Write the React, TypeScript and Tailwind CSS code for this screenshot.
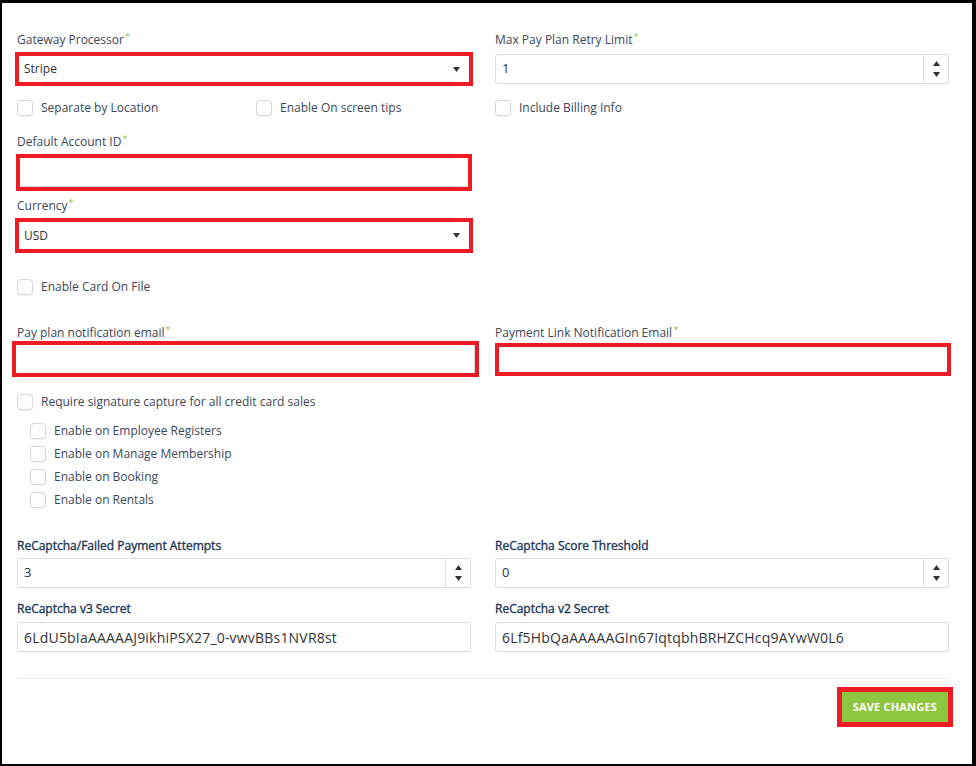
import type { ReactNode } from 'react';

const font = { fontFamily: '"Open Sans", "Liberation Sans", Arial, sans-serif' };

function Label({ children, req, strong }: { children: ReactNode; req?: boolean; strong?: boolean }) {
  return (
    <div
      className={
        'h-4 text-[12px] leading-4 whitespace-nowrap ' +
        (strong ? 'text-[#1c3554] [-webkit-text-stroke:0.35px_#1c3554]' : 'text-[#3b4757]')
      }
    >
      {children}
      {req && <sup className="ml-[1px] text-[9px] text-[#8cc63f]">*</sup>}
    </div>
  );
}

function Check({ label }: { label: string }) {
  return (
    <label className="flex h-4 items-center gap-2 text-[12px] text-[#3b4757]">
      <span className="h-4 w-4 shrink-0 rounded-[4px] border border-[#d6d6d6] bg-white shadow-[0_1px_1px_rgba(0,0,0,0.05)]" />
      <span className="whitespace-nowrap">{label}</span>
    </label>
  );
}

// red highlight around a field
function Frame({ children, className }: { children: ReactNode; className: string }) {
  return <div className={'border-4 border-[#ed1c24] bg-white ' + className}>{children}</div>;
}

function Caret() {
  return (
    <svg width="7" height="5" viewBox="0 0 7 5" className="shrink-0">
      <path d="M0 0h7L3.5 5z" fill="#333" />
    </svg>
  );
}

function NumberBox({ value }: { value: string }) {
  return (
    <div className="flex h-[30px] items-stretch rounded-[3px] border border-[#dcdcdc] bg-white">
      <div className="flex flex-1 items-center pl-[6px] text-[13px] text-[#333]">{value}</div>
      <div className="flex w-[25px] flex-col items-center justify-center gap-[6px] border-l border-[#dcdcdc]">
        <svg width="7" height="5" viewBox="0 0 7 5">
          <path d="M0 5h7L3.5 0z" fill="#333" />
        </svg>
        <svg width="7" height="5" viewBox="0 0 7 5">
          <path d="M0 0h7L3.5 5z" fill="#333" />
        </svg>
      </div>
    </div>
  );
}

function TextBox({ value }: { value: string }) {
  return (
    <div className="flex h-[30px] items-center rounded-[3px] border border-[#dcdcdc] bg-white pl-[6px] text-[14px] tracking-[0.2px] text-[#333]">
      {value}
    </div>
  );
}

export default function App() {
  return (
    <div
      style={font}
      className="h-[766px] w-[976px] overflow-hidden border-t-[3px] border-r-4 border-b-2 border-l-2 border-black bg-white pl-[15px] pr-[23px]"
    >
      <div className="mt-[29px] grid grid-cols-2 gap-x-6">
        <div>
          <Label req>Gateway Processor</Label>
          <Frame className="-mx-[2px] mt-1 h-[34px]">
            <div className="flex h-full items-center justify-between pr-[9px] pl-[5px] text-[12px] text-[#333]">
              Stripe
              <Caret />
            </div>
          </Frame>
        </div>
        <div>
          <Label req>Max Pay Plan Retry Limit</Label>
          <div className="mt-[6px]">
            <NumberBox value="1" />
          </div>
        </div>
      </div>

      <div className="mt-[14px] grid grid-cols-2 gap-x-6">
        <div className="grid grid-cols-2 gap-x-6">
          <Check label="Separate by Location" />
          <Check label="Enable On screen tips" />
        </div>
        <Check label="Include Billing Info" />
      </div>

      <div className="mt-[18px] grid grid-cols-2 gap-x-6">
        <div>
          <Label req>Default Account ID</Label>
          <Frame className="-mx-[1px] mt-[4px] h-[37px]">
            <div className="h-full border-b border-[#d9d9d9]" />
          </Frame>
          <div className="mt-[7px]">
            <Label req>Currency</Label>
          </div>
          <Frame className="-mx-[2px] mt-[4px] h-[35px]">
            <div className="flex h-full items-center justify-between pr-[9px] pl-[5px] text-[12px] text-[#333]">
              USD
              <Caret />
            </div>
          </Frame>
        </div>
      </div>

      <div className="mt-[26px]">
        <Check label="Enable Card On File" />
      </div>

      <div className="mt-[30px] grid grid-cols-2 gap-x-6">
        <div>
          <Label req>Pay plan notification email</Label>
          <Frame className="-mr-[8px] -ml-[5px] h-[36px]">
            <div className="h-full border-r border-[#d9d9d9]" />
          </Frame>
        </div>
        <div>
          <Label req>Payment Link Notification Email</Label>
          <Frame className="mt-[2px] -mr-[2px] h-[33px]">
            <div className="h-full" />
          </Frame>
        </div>
      </div>

      <div className="mt-[17px]">
        <Check label="Require signature capture for all credit card sales" />
      </div>
      <div className="mt-[13px] flex flex-col gap-[7px] pl-[13px]">
        <Check label="Enable on Employee Registers" />
        <Check label="Enable on Manage Membership" />
        <Check label="Enable on Booking" />
        <Check label="Enable on Rentals" />
      </div>

      <div className="mt-[30px] grid grid-cols-2 gap-x-6">
        <div>
          <Label strong>ReCaptcha/Failed Payment Attempts</Label>
          <div className="mt-[4px]">
            <NumberBox value="3" />
          </div>
          <div className="mt-[13px]">
            <Label strong>ReCaptcha v3 Secret</Label>
          </div>
          <div className="mt-[5px]">
            <TextBox value="6LdU5bIaAAAAAJ9ikhiPSX27_0-vwvBBs1NVR8st" />
          </div>
        </div>
        <div>
          <Label strong>ReCaptcha Score Threshold</Label>
          <div className="mt-[4px]">
            <NumberBox value="0" />
          </div>
          <div className="mt-[13px]">
            <Label strong>ReCaptcha v2 Secret</Label>
          </div>
          <div className="mt-[5px]">
            <TextBox value="6Lf5HbQaAAAAAGIn67IqtqbhBRHZCHcq9AYwW0L6" />
          </div>
        </div>
      </div>

      <div className="mt-[26px] h-px bg-[#e8e8e8]" />

      <div className="mt-[8px] flex justify-end">
        <Frame className="-mr-[4px] h-[40px] border-[5px]">
          <button className="h-full bg-[#8dc63f] px-[11px] text-[11px] font-bold tracking-[0.2px] text-white">
            SAVE CHANGES
          </button>
        </Frame>
      </div>
    </div>
  );
}
